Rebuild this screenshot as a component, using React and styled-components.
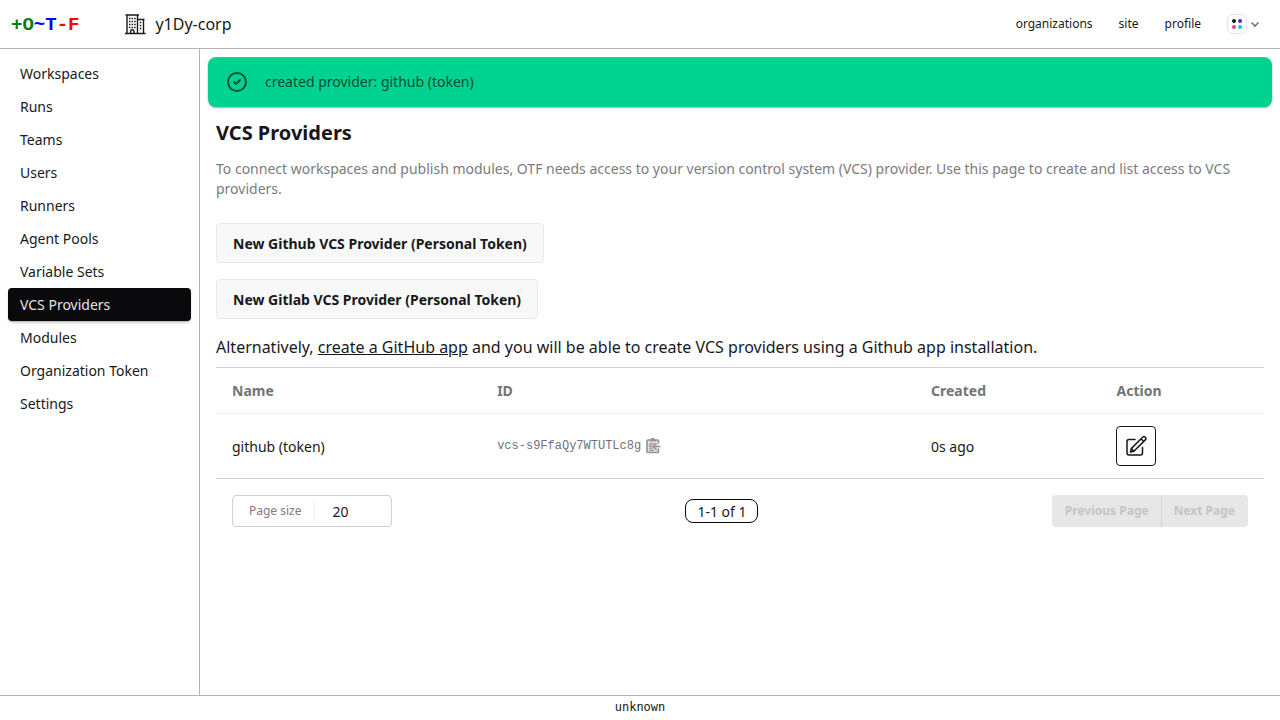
import React from "react";
import styled, { createGlobalStyle } from "styled-components";

const ink = "#18181b";
const sans = '"Noto Sans", sans-serif';
const mono = '"Liberation Mono", monospace';

const GlobalStyle = createGlobalStyle`
  *, *::before, *::after { box-sizing: border-box; }
  body {
    margin: 0;
    background: #fff;
    color: ${ink};
    font: 16px/24px ${sans};
  }
  a { color: inherit; text-decoration: none; }
  h1, p, ul { margin: 0; padding: 0; }
  button, input { font-family: inherit; color: inherit; margin: 0; }
  svg { display: block; flex: none; }
`;

const Page = styled.div`
  min-height: 100vh;
  display: flex;
  flex-direction: column;
`;

const Header = styled.header`
  display: flex;
  align-items: center;
  height: 49px;
  padding: 0 16px 0 11px;
  border-bottom: 1px solid #b4b4b5;
`;

const Logo = styled.a`
  padding-top: 2px;
  font: bold 19px/28px ${mono};
  margin-right: 45px;
`;

const LogoPart = styled.span`
  color: ${(p) => p.$color};
`;

const OrgLink = styled.a`
  display: flex;
  align-items: center;
  gap: 8px;
`;

const TopNav = styled.nav`
  display: flex;
  align-items: center;
  gap: 26px;
  margin-left: auto;
  font-size: 12px;
  line-height: 16px;
`;

const ThemeButton = styled.button`
  display: flex;
  align-items: center;
  gap: 3px;
  padding: 0;
  margin-right: 4px;
  border: 0;
  background: none;
`;

const Swatch = styled.span`
  display: grid;
  grid-template-columns: 4px 4px;
  gap: 2px;
  padding: 4px;
  border: 1px solid #e4e4e4;
  border-radius: 6px;
  width: 20px;
  height: 20px;
  place-content: center;
`;

const Dot = styled.i`
  width: 4px;
  height: 4px;
  border-radius: 50%;
  background: ${(p) => p.$color};
`;

const Body = styled.div`
  flex: 1;
  display: flex;
`;

const Sidebar = styled.nav`
  flex: 0 0 200px;
  padding: 8px;
  border-right: 1px solid #b4b4b5;
`;

const MenuList = styled.ul`
  list-style: none;
`;

const MenuLink = styled.a`
  display: block;
  padding: 6px 12px;
  font-size: 14px;
  line-height: 21px;
  border-radius: 4px;
  ${(p) =>
    p.$active &&
    `
    background: #09090b;
    color: #e4e4e7;
    box-shadow: 0 2px 3px -1px rgba(9, 9, 11, 0.4);
  `}
`;

const Main = styled.main`
  flex: 1;
  min-width: 0;
  padding: 8px;
`;

const Alert = styled.div`
  display: flex;
  align-items: center;
  gap: 16px;
  padding: 13px 17px;
  border-radius: 8px;
  background: #00d390;
  color: #004c39;
  font-size: 14px;
  box-shadow: 0 1px 2px rgba(0, 60, 40, 0.4), inset 0 1px rgba(255, 255, 255, 0.12);
`;

const Content = styled.div`
  padding: 12px 8px;
`;

const Title = styled.h1`
  font-size: 20px;
  line-height: 28px;
  font-weight: 700;
`;

const Description = styled.p`
  margin: 12px 0 24px;
  color: #7b7b7d;
  font-size: 14px;
  line-height: 20px;
`;

const Actions = styled.div`
  display: flex;
  flex-direction: column;
  align-items: flex-start;
  gap: 16px;
  margin-bottom: 16px;
`;

const NewButton = styled.button`
  height: 40px;
  padding: 0 16px;
  border: 1px solid #e8e8e8;
  border-radius: 4px;
  background: #f8f8f8;
  font-size: 14px;
  font-weight: 700;
`;

const InlineLink = styled.a`
  text-decoration: underline;
`;

const Table = styled.table`
  width: 100%;
  margin-top: 8px;
  border-collapse: collapse;
  table-layout: fixed;
  font-size: 14px;
  line-height: 20px;
  border-top: 1px solid #d1d1d1;
  border-bottom: 1px solid #d1d1d1;
`;

const Column = styled.col`
  width: ${(p) => p.$width};
`;

const HeadCell = styled.th`
  padding: 13px 16px 12px;
  text-align: left;
  font-weight: 700;
  color: #747476;
  border-bottom: 1px solid #f3f3f3;
`;

const Cell = styled.td`
  padding: 12px 16px;
  line-height: 21px;
`;

const Identifier = styled.span`
  display: flex;
  align-items: center;
  gap: 4px;
  font: 12px/16px ${mono};
  color: #6b7280;
`;

const CopyButton = styled.button`
  padding: 0;
  border: 0;
  background: none;
  color: #969696;
`;

const EditButton = styled.button`
  display: grid;
  place-content: center;
  width: 40px;
  height: 40px;
  padding: 0;
  border: 1px solid ${ink};
  border-radius: 4px;
  background: #fff;
`;

const Pager = styled.div`
  display: flex;
  align-items: center;
  justify-content: space-between;
  padding: 16px;
`;

const PageSize = styled.label`
  display: flex;
  align-items: center;
  width: 160px;
  height: 32px;
  border: 1px solid #d1d1d1;
  border-radius: 4px;
`;

const PageSizeLabel = styled.span`
  padding: 0 12px 0 16px;
  border-right: 1px solid #f0f0f0;
  font-size: 12px;
  line-height: 22px;
  white-space: nowrap;
  color: #7b7b7d;
`;

const PageSizeInput = styled.input`
  flex: 1;
  min-width: 0;
  padding: 0 0 0 18px;
  border: 0;
  outline: 0;
  background: none;
  font-size: 14px;
`;

const RangeBadge = styled.span`
  padding: 1px 11px 0;
  border: 1px solid #09090b;
  border-radius: 8px;
  font-size: 14px;
  line-height: 21px;
`;

const ButtonGroup = styled.div`
  display: flex;
  padding: 0 1px;
  border-radius: 4px;
  background: #e7e7e7;
`;

const PageButton = styled.button`
  height: 32px;
  padding: 0 12px 2px;
  border: 0;
  background: none;
  font-size: 12px;
  font-weight: 700;
  &:disabled { color: #c4c4c5; }
  & + & { border-left: 1px solid #d1d1d1; }
`;

const Footer = styled.footer`
  height: 25px;
  border-top: 1px solid #b4b4b5;
  text-align: center;
  font: 12px/23px "DejaVu Sans Mono", monospace;
`;

const BuildingIcon = () => (
  <svg width="23" height="22" viewBox="0 0 23 22" fill="none" stroke={ink} strokeWidth="1.4">
    <path d="M1 20.5h20.500M3 20V2.500M13.500 20V2.500M1.500 2h13.500M14 6.500h6.500M19.500 7v13.500" />
    <path d="M6.600 20.500v-2a1.700 1.700 0 0 1 3.400 0v2" />
    <path
      d="M5 5.500h1.500M7.600 5.500h1.500M10.200 5.500h1.500M5 8.500h1.500M7.600 8.500h1.500M10.200 8.500h1.500M5 11.500h1.500M7.600 11.500h1.500M10.200 11.500h1.500M5 14.500h1.500M7.600 14.500h1.500M10.200 14.500h1.500M15.800 9.500h1.500M15.800 12.500h1.500M15.800 15.500h1.500"
      strokeWidth="1.4"
    />
  </svg>
);

const ChevronIcon = () => (
  <svg width="10" height="10" viewBox="0 0 10 10" fill="none" stroke="#747476" strokeWidth="1.6">
    <path d="M1.5 3.5 5 7l3.500-3.500" />
  </svg>
);

const CheckIcon = () => (
  <svg width="24" height="24" viewBox="0 0 24 24" fill="none" stroke="currentColor" strokeWidth="2" strokeLinecap="round" strokeLinejoin="round">
    <path d="M9 12l2 2 4-4m6 2a9 9 0 1 1-18 0 9 9 0 0 1 18 0z" />
  </svg>
);

const PasteIcon = () => (
  <svg width="16" height="16" viewBox="0 0 16 16" fill="none" stroke="currentColor" strokeWidth="1.7">
    <path d="M13.500 5.500V3a1 1 0 0 0-1-1H3a1 1 0 0 0-1 1v10.500a1 1 0 0 0 1 1h9.500a1 1 0 0 0 1-1v-3" fill="#e2e2e2" />
    <path d="M4.500 2.500h6.500M6 1h3.500" strokeWidth="2" />
    <path d="M4 5.800h5.500M4 8h3M4 10.200h4M4 12.300h5" strokeWidth="1.300" />
    <path d="M15.500 8.500H8.500M11.500 5.200 8.200 8.500l3.300 3.300" strokeWidth="1.500" />
  </svg>
);

const EditIcon = () => (
  <svg width="24" height="24" viewBox="0 0 24 24" fill="none" stroke="currentColor" strokeWidth="1.5" strokeLinejoin="round" strokeLinecap="round">
    <path d="M11 5.500H5a2 2 0 0 0-2 2v11.500a2 2 0 0 0 2 2h11.500a2 2 0 0 0 2-2V13.500" />
    <path d="M6.500 18l.7-3.400L18.600 3.200a1.900 1.900 0 0 1 2.700 2.700L9.900 17.300zM17 4.800 19.700 7.500M8 15.300l1.300 1.300" />
  </svg>
);

const logoParts = [
  ["+O", "green"],
  ["~T", "blue"],
  ["-F", "red"],
];

const menu = [
  "Workspaces",
  "Runs",
  "Teams",
  "Users",
  "Runners",
  "Agent Pools",
  "Variable Sets",
  "VCS Providers",
  "Modules",
  "Organization Token",
  "Settings",
];

const themeColors = [ink, "#422ad5", "#f43098", "#00d3bb"];

export default function App() {
  return (
    <Page>
      <GlobalStyle />
      <Header>
        <Logo href="#">
          {logoParts.map(([text, color]) => (
            <LogoPart key={text} $color={color}>{text}</LogoPart>
          ))}
        </Logo>
        <OrgLink href="#">
          <BuildingIcon />
          y1Dy-corp
        </OrgLink>
        <TopNav aria-label="Site">
          <a href="#">organizations</a>
          <a href="#">site</a>
          <a href="#">profile</a>
          <ThemeButton type="button" aria-label="Theme">
            <Swatch>
              {themeColors.map((c) => (
                <Dot key={c} $color={c} />
              ))}
            </Swatch>
            <ChevronIcon />
          </ThemeButton>
        </TopNav>
      </Header>
      <Body>
        <Sidebar aria-label="Organization">
          <MenuList>
            {menu.map((item) => (
              <li key={item}>
                <MenuLink href="#" $active={item === "VCS Providers"}>{item}</MenuLink>
              </li>
            ))}
          </MenuList>
        </Sidebar>
        <Main>
          <Alert role="alert">
            <CheckIcon />
            <span>created provider: github (token)</span>
          </Alert>
          <Content>
            <Title>VCS Providers</Title>
            <Description>
              To connect workspaces and publish modules, OTF needs access to your version control
              system (VCS) provider. Use this page to create and list access to VCS providers.
            </Description>
            <Actions>
              <NewButton type="button">New Github VCS Provider (Personal Token)</NewButton>
              <NewButton type="button">New Gitlab VCS Provider (Personal Token)</NewButton>
            </Actions>
            <p>
              Alternatively, <InlineLink href="#">create a GitHub app</InlineLink> and you will be
              able to create VCS providers using a Github app installation.
            </p>
            <Table>
              <colgroup>
                <Column $width="25.3%" />
                <Column $width="41.4%" />
                <Column $width="17.7%" />
                <Column $width="15.6%" />
              </colgroup>
              <thead>
                <tr>
                  <HeadCell scope="col">Name</HeadCell>
                  <HeadCell scope="col">ID</HeadCell>
                  <HeadCell scope="col">Created</HeadCell>
                  <HeadCell scope="col">Action</HeadCell>
                </tr>
              </thead>
              <tbody>
                <tr>
                  <Cell>github (token)</Cell>
                  <Cell>
                    <Identifier>
                      vcs-s9FfaQy7WTUTLc8g
                      <CopyButton type="button" aria-label="Copy ID">
                        <PasteIcon />
                      </CopyButton>
                    </Identifier>
                  </Cell>
                  <Cell>0s ago</Cell>
                  <Cell>
                    <EditButton type="button" aria-label="Edit">
                      <EditIcon />
                    </EditButton>
                  </Cell>
                </tr>
              </tbody>
            </Table>
            <Pager>
              <PageSize>
                <PageSizeLabel>Page size</PageSizeLabel>
                <PageSizeInput defaultValue="20" inputMode="numeric" />
              </PageSize>
              <RangeBadge>1-1 of 1</RangeBadge>
              <ButtonGroup>
                <PageButton type="button" disabled>Previous Page</PageButton>
                <PageButton type="button" disabled>Next Page</PageButton>
              </ButtonGroup>
            </Pager>
          </Content>
        </Main>
      </Body>
      <Footer>unknown</Footer>
    </Page>
  );
}
